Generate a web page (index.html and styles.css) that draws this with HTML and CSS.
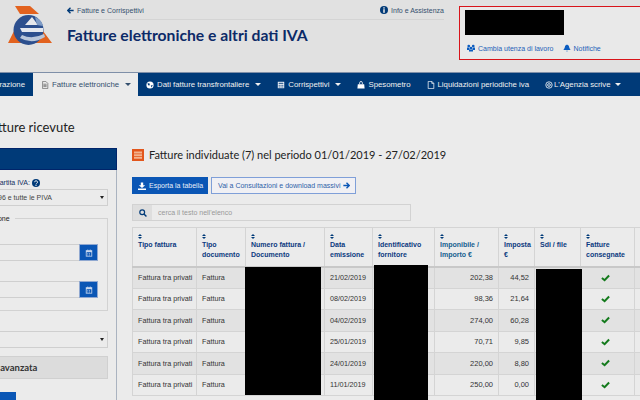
FILE: index.html
```html
<!DOCTYPE html>
<html lang="it">
<head>
<meta charset="utf-8">
<title>Fatture elettroniche e altri dati IVA</title>
<link rel="stylesheet" href="styles.css">
</head>
<body>
<header class="top">
  <svg class="logo" width="46" height="44" viewBox="0 0 46 44">
    <path d="M7 1 L22 1 L31 9 L12 9 Z" fill="#e2621f"/>
    <path d="M7 24 L0 38 L21 38 Q10 36 7 24Z M35 26 L44 38 L24 38 Q33 36 35 26Z" fill="#e2621f"/>
    <ellipse cx="20.500" cy="25" rx="15" ry="15" fill="#2c4f8e"/>
    <path d="M24 12 L30 20 L17 20Z" fill="#e6e8ec"/>
    <path d="M12 23 H35 V27 H14Z" fill="#e4e8ef"/>
    <path d="M14 30 Q24 35 36 29 L37 32 Q24 40 12 33Z" fill="#b9c6da"/>
    <path d="M27 12 Q34 15 35 21 L29 20Z" fill="#7f9cc6"/>
  </svg>
  <div class="top-main">
    <div class="crumbs">
      <a class="crumb"><svg class="ic7" viewBox="0 0 10 10"><path d="M5 1 L1 5 L5 9 M1.500 5 H9.500" fill="none" stroke="#003a78" stroke-width="2"/></svg>Fatture e Corrispettivi</a>
      <a class="crumb"><svg class="ic9" viewBox="0 0 10 10"><circle cx="5" cy="5" r="5" fill="#003a78"/><rect x="4" y="4" width="2" height="4.500" fill="#e0e0e0"/><rect x="4" y="1.600" width="2" height="1.600" fill="#e0e0e0"/></svg>Info e Assistenza</a>
    </div>
    <h1 class="app-title">Fatture elettroniche e altri dati IVA</h1>
  </div>
  <div class="user-box">
    <div class="user-name"></div>
    <div class="user-links">
      <a class="user-link"><svg class="ic8" viewBox="0 0 10 10"><circle cx="2.200" cy="2.500" r="1.700" fill="#0b5cc0"/><circle cx="7.800" cy="2.500" r="1.700" fill="#0b5cc0"/><circle cx="5" cy="5" r="1.700" fill="#0b5cc0"/><path d="M0 4.500h3v3H0zM7 4.500h3v3H7zM2.500 7h5v2.500h-5z" fill="#0b5cc0"/></svg>Cambia utenza di lavoro</a>
      <a class="user-link"><svg class="ic8" viewBox="0 0 10 10"><path d="M5 .5 Q8 1.500 8 5 L9.500 7.500 H.5 L2 5 Q2 1.500 5 .5Z M4 8.300h2L5 9.800Z" fill="#0b5cc0"/></svg>Notifiche</a>
    </div>
  </div>
</header>

<nav class="nav">
  <a class="nav-item cut">Fatturazione</a>
  <a class="nav-item active"><svg class="ic9" viewBox="0 0 10 10"><path d="M2 .5h4l2.500 2.500v6.500H2z M3 4h4M3 5.500h4M3 7h4" fill="none" stroke="#666" stroke-width=".9"/></svg>Fatture elettroniche<i class="caret"></i></a>
  <a class="nav-item"><svg class="ic9" viewBox="0 0 10 10"><circle cx="5" cy="5" r="4.500" fill="#fff"/><path d="M2 2.500 L5 3.500 L4 6 L2.500 5Z M6 5.500 L8.500 5 L7 8Z" fill="#003a78"/></svg>Dati fatture transfrontaliere<i class="caret"></i></a>
  <a class="nav-item"><svg class="ic9" viewBox="0 0 10 10"><path d="M1 1h8v8H1z" fill="#fff"/><path d="M2 2.200h6v1.300H2z M2 4.800h1.500v1.200H2z M4.300 4.800h1.500v1.200H4.300z M6.500 4.800H8v1.200H6.500z M2 6.800h1.500V8H2z M4.300 6.800h1.500V8H4.300z M6.500 6.800H8V8H6.500z" fill="#003a78"/></svg>Corrispettivi<i class="caret"></i></a>
  <a class="nav-item"><svg class="ic9" viewBox="0 0 10 10"><path d="M1 4h8l.5 5.500H.5z" fill="#fff"/><path d="M3.300 4V2.300a1.700 1.700 0 0 1 3.400 0V4" fill="none" stroke="#fff"/></svg>Spesometro</a>
  <a class="nav-item"><svg class="ic9" viewBox="0 0 10 10"><path d="M1.500 .5h4.500l2.500 2.500v6.500h-7z M6 .5v2.500h2.500" fill="none" stroke="#fff" stroke-width=".9"/></svg>Liquidazioni periodiche iva</a>
  <a class="nav-item tight"><svg class="ic9" viewBox="0 0 10 10"><circle cx="5" cy="5" r="4" fill="none" stroke="#fff" stroke-width="1"/><circle cx="5" cy="5" r="1.700" fill="none" stroke="#fff" stroke-width="1"/></svg>L'Agenzia scrive<i class="caret"></i></a>
</nav>

<main class="page">
  <aside class="side">
    <h2 class="page-title">Fatture ricevute</h2>
    <section class="panel">
      <div class="panel-head"></div>
      <div class="panel-body">
        <div class="field-label">Partita IVA: <svg class="ic9" viewBox="0 0 10 10"><circle cx="5" cy="5" r="5" fill="#003a78"/><path d="M3.300 4a1.800 1.700 0 1 1 2.500 1.500Q5 6 5 6.700" fill="none" stroke="#eee" stroke-width="1.200"/><rect x="4.300" y="7.400" width="1.400" height="1.300" fill="#eee"/></svg></div>
        <div class="select"><span>01234567896 e tutte le PIVA</span><i class="sel-caret"></i></div>
        <fieldset class="dates">
          <legend>Data di emissione</legend>
          <div class="date-row first"><div class="date-input"></div><div class="date-btn"><svg class="ic8" viewBox="0 0 10 10"><path d="M1 1.500h8v8H1z" fill="#c8d8ee"/><path d="M2 4h6v4.500H2z" fill="#0a56b5"/><path d="M3 .5h1v2H3zM6 .5h1v2H6zM3 5h1v1H3zM5 5h1v1H5zM3 7h1v1H3zM5 7h1v1H5z" fill="#c8d8ee"/></svg></div></div>
          <div class="date-row"><div class="date-input"></div><div class="date-btn"><svg class="ic8" viewBox="0 0 10 10"><path d="M1 1.500h8v8H1z" fill="#c8d8ee"/><path d="M2 4h6v4.500H2z" fill="#0a56b5"/><path d="M3 .5h1v2H3zM6 .5h1v2H6zM3 5h1v1H3zM5 5h1v1H5zM3 7h1v1H3zM5 7h1v1H5z" fill="#c8d8ee"/></svg></div></div>
        </fieldset>
        <div class="select second"><span></span><i class="sel-caret"></i></div>
        <div class="advanced">Ricerca avanzata</div>
        <div class="search-btn">Ricerca</div>
      </div>
    </section>
  </aside>

  <section class="content">
    <h2 class="result-title"><svg class="list-ic" viewBox="0 0 12 12"><rect width="12" height="12" fill="#e2561c"/><path d="M2 2.500h8v2H2zM2 5.200h8v1.800H2zM2 7.700h8v2H2z" fill="#f3b48f"/></svg>Fatture individuate (7) nel periodo 01/01/2019 - 27/02/2019</h2>
    <div class="actions">
      <a class="btn solid"><svg class="ic8" viewBox="0 0 10 10"><path d="M3.500 .5h3v3.500H9L5 7.500 1 4h2.500zM0 8h10v2H0z" fill="#fff"/></svg>Esporta la tabella</a>
      <a class="btn outline">Vai a Consultazioni e download massivi<svg class="ic7" viewBox="0 0 10 10"><path d="M5 1 L9 5 L5 9 M8.500 5 H.5" fill="none" stroke="#0a56b5" stroke-width="2"/></svg></a>
    </div>
    <div class="filter">
      <div class="filter-ic"><svg class="ic8" viewBox="0 0 10 10"><circle cx="4" cy="4" r="3" fill="none" stroke="#003a78" stroke-width="1.500"/><path d="M6.200 6.200 L9.300 9.300" stroke="#003a78" stroke-width="1.800"/></svg></div>
      <div class="filter-text">cerca il testo nell'elenco</div>
    </div>
    <div class="table-wrap">
      <table class="grid">
        <colgroup><col class="c1"><col class="c2"><col class="c3"><col class="c4"><col class="c5"><col class="c6"><col class="c7"><col class="c8"><col class="c9"><col class="c10"></colgroup>
        <thead><tr>
          <th><i class="sort"></i>Tipo fattura</th>
          <th><i class="sort"></i>Tipo documento</th>
          <th><i class="sort"></i>Numero fattura / Documento</th>
          <th><i class="sort"></i>Data emissione</th>
          <th><i class="sort"></i>Identificativo fornitore</th>
          <th class="teal"><i class="sort"></i>Imponibile / Importo €</th>
          <th><i class="sort"></i>Imposta €</th>
          <th><i class="sort"></i>Sdi / file</th>
          <th><i class="sort"></i>Fatture consegnate</th>
          <th><i class="sort"></i>Data</th>
        </tr></thead>
        <tbody>
          <tr><td>Fattura tra privati</td><td>Fattura</td><td></td><td>21/02/2019</td><td></td><td class="num">202,38</td><td class="num">44,52</td><td></td><td class="ok"><svg class="check" viewBox="0 0 10 8"><path d="M1 4 L4 6.500 L9 1.200" fill="none" stroke="#137a1c" stroke-width="2.200"/></svg></td><td>2</td></tr>
          <tr><td>Fattura tra privati</td><td>Fattura</td><td></td><td>08/02/2019</td><td></td><td class="num">98,36</td><td class="num">21,64</td><td></td><td class="ok"><svg class="check" viewBox="0 0 10 8"><path d="M1 4 L4 6.500 L9 1.200" fill="none" stroke="#137a1c" stroke-width="2.200"/></svg></td><td>1</td></tr>
          <tr><td>Fattura tra privati</td><td>Fattura</td><td></td><td>04/02/2019</td><td></td><td class="num">274,00</td><td class="num">60,28</td><td></td><td class="ok"><svg class="check" viewBox="0 0 10 8"><path d="M1 4 L4 6.500 L9 1.200" fill="none" stroke="#137a1c" stroke-width="2.200"/></svg></td><td>0</td></tr>
          <tr><td>Fattura tra privati</td><td>Fattura</td><td></td><td>25/01/2019</td><td></td><td class="num">70,71</td><td class="num">9,85</td><td></td><td class="ok"><svg class="check" viewBox="0 0 10 8"><path d="M1 4 L4 6.500 L9 1.200" fill="none" stroke="#137a1c" stroke-width="2.200"/></svg></td><td>2</td></tr>
          <tr><td>Fattura tra privati</td><td>Fattura</td><td></td><td>24/01/2019</td><td></td><td class="num">220,00</td><td class="num">8,80</td><td></td><td class="ok"><svg class="check" viewBox="0 0 10 8"><path d="M1 4 L4 6.500 L9 1.200" fill="none" stroke="#137a1c" stroke-width="2.200"/></svg></td><td>2</td></tr>
          <tr><td>Fattura tra privati</td><td>Fattura</td><td></td><td>11/01/2019</td><td></td><td class="num">250,00</td><td class="num">0,00</td><td></td><td class="ok"><svg class="check" viewBox="0 0 10 8"><path d="M1 4 L4 6.500 L9 1.200" fill="none" stroke="#137a1c" stroke-width="2.200"/></svg></td><td>1</td></tr>
        </tbody>
      </table>
      <div class="mask m1"></div>
      <div class="mask m2"></div>
      <div class="mask m3"></div>
    </div>
  </section>
</main>
</body>
</html>
```
FILE: styles.css
```css
html, body { margin: 0; padding: 0; }
body {
  width: 640px; height: 400px; overflow: hidden;
  background: #ebebeb; color: #333;
  font-family: "Liberation Sans", Arial, sans-serif; font-size: 7px;
}
a { color: inherit; text-decoration: none; }
svg { display: block; flex: none; }
.ic7 { width: 7px; height: 7px; }
.ic8 { width: 8px; height: 8px; }
.ic9 { width: 8px; height: 8px; }

/* Header */
.top { height: 72px; box-sizing: border-box; background: #e1e1e1; display: flex; align-items: flex-start; overflow: hidden; }
.logo { margin: 5px 0 0 8px; }
.top-main { width: 377px; margin-left: 13px; flex: none; }
.crumbs { display: flex; justify-content: space-between; height: 20px; border-bottom: 1px solid #d4d4d4; box-sizing: border-box; color: #35506e; align-items: center; padding-top: 1px; }
.crumb { display: flex; align-items: center; gap: 3px; }
.app-title { margin: 3px 0 0; font: 700 15.700px/24px Lato, sans-serif; color: #0c2a68; white-space: nowrap; }
.user-box { margin: 6px 0 0 15px; width: 200px; height: 54px; box-sizing: border-box; border: 1px solid #d8141a; background: #e9e9e9; padding: 3px 5px; flex: none; }
.user-name { width: 99px; height: 25px; background: #000; }
.user-links { display: flex; gap: 9px; margin-top: 9px; padding-left: 2px; color: #1d5fb8; }
.user-link { display: flex; align-items: center; gap: 3px; }

/* Nav */
.nav { height: 24px; box-sizing: border-box; background: #003a78; border-top: 1px solid #7f8fa8; display: flex; color: #f0f0f0; margin-left: -32px; white-space: nowrap; font-size: 7.800px; }
.nav-item { display: flex; align-items: center; gap: 3px; padding: 0 8px; flex: none; }
.nav-item.cut { width: 65px; box-sizing: border-box; justify-content: flex-end; }
.nav-item.active { background: #ebebeb; color: #35506e; width: 105px; box-sizing: border-box; }
.nav-item.tight { gap: 1px; }
.caret { width: 0; height: 0; border: 3px solid transparent; border-top-color: currentColor; border-bottom: 0; margin-left: 3px; }

/* Layout */
.page { display: flex; align-items: flex-start; height: 304px; overflow: hidden; }
.side { width: 117px; flex: none; }
.page-title { margin: 21px 0 11px -15px; font: 400 13px/20px Lato, sans-serif; color: #222; white-space: nowrap; }
.panel { margin-left: -50px; border-right: 1px solid #aab3c0; }
.panel-head { height: 22px; background: #003a78; margin-right: -1px; border: 1px solid #00246a; box-sizing: border-box; }
.panel-body { padding: 8px 8px 0 0; color: #222; display: flex; flex-direction: column; align-items: flex-end; height: 240px; }
.field-label { display: flex; align-items: center; gap: 2px; color: #12305f; height: 9px; align-self: flex-start; margin-left: 45px; white-space: nowrap; }
.select { width: 160px; height: 17px; margin-top: 2px; box-sizing: border-box; border: 1px solid #cfcfcf; display: flex; align-items: center; justify-content: flex-end; padding-right: 3px; color: #444; white-space: nowrap; }
.select span { margin-right: 48px; }
.sel-caret { width: 0; height: 0; border: 2px solid transparent; border-top: 3px solid #222; border-bottom: 0; }
.dates { width: 160px; height: 97px; margin: 8px 0 0; box-sizing: border-box; border: 1px solid #d2d2d2; padding: 0 9px 0 0; display: flex; flex-direction: column; align-items: flex-end; }
.dates legend { margin-left: 0; padding: 0 5px; color: #222; line-height: 9px; white-space: nowrap; }
.date-row { display: flex; width: 148px; height: 17px; margin-top: 20px; }
.date-row.first { margin-top: 21px; }
.date-input { flex: 1; border-top: 1px solid #cfcfcf; border-bottom: 1px solid #cfcfcf; box-sizing: border-box; }
.date-btn { width: 19px; background: #0a56b5; border: 1px solid #90a8d0; box-sizing: border-box; display: flex; align-items: center; justify-content: center; }
.second { margin-top: 20px; }
.advanced { width: 160px; height: 23px; margin-top: 8px; box-sizing: border-box; background: #dcdcdc; border: 1px solid #d0d0d0; font: 700 9.500px/21px Lato, sans-serif; padding-left: 18px; white-space: nowrap; color: #333; overflow: hidden; }
.search-btn { width: 50px; height: 20px; margin: 13px 0 0 16px; align-self: flex-start; background: #0a56b5; color: #fff; text-align: right; padding-right: 6px; box-sizing: border-box; line-height: 20px; }

.content { margin-left: 15px; flex: none; width: 600px; }
.result-title { display: flex; align-items: center; gap: 5px; margin: 49px 0 0; font: 400 11px/20px Lato, sans-serif; color: #222; white-space: nowrap; }
.list-ic { width: 12px; height: 12px; }
.actions { display: flex; gap: 3px; margin-top: 12px; }
.btn { display: flex; align-items: center; height: 17px; box-sizing: border-box; gap: 3px; white-space: nowrap; }
.btn.solid { background: #0a56b5; color: #e8eef8; width: 76px; padding-left: 6px; }
.btn.outline { border: 1px solid #7f9fd8; background: #f0f0f4; color: #2f5fa8; width: 145px; padding-left: 6px; }
.filter { display: flex; height: 17px; width: 279px; margin-top: 10px; box-sizing: border-box; border: 1px solid #d2d2d2; }
.filter-ic { width: 19px; background: #dedede; display: flex; align-items: center; justify-content: center; }
.filter-text { padding-left: 6px; color: #999; line-height: 15px; }

/* Table */
.table-wrap { position: relative; margin-top: 6px; width: 600px; }
.grid { border-collapse: collapse; table-layout: fixed; width: 590px; }
.c1 { width: 64px; } .c2 { width: 49px; } .c3 { width: 79px; } .c4 { width: 48px; } .c5 { width: 62px; }
.c6 { width: 64px; } .c7 { width: 36px; } .c8 { width: 46px; } .c9 { width: 54px; } .c10 { width: 88px; }
.grid th { height: 39px; box-sizing: border-box; padding: 6px 5px 0; border: 1px solid #d4d4d4; border-bottom: 2px solid #c8c8c8; text-align: left; vertical-align: top; color: #0c3a80; font-size: 7px; font-weight: 700; line-height: 10px; background: #ebebeb; }
.grid th.teal { color: #175f90; }
.sort { display: flex; flex-direction: column; gap: 1px; width: 5px; height: 6px; }
.sort::before, .sort::after { content: ""; width: 0; height: 0; border-left: 2.500px solid transparent; border-right: 2.500px solid transparent; }
.sort::before { border-bottom: 2.500px solid #003a78; }
.sort::after { border-top: 2.500px solid #003a78; }
.grid td { height: 21.500px; box-sizing: border-box; padding: 0 5px; border: 1px solid #d4d4d4; white-space: nowrap; color: #333; font-size: 7.200px; overflow: hidden; }
.grid tbody tr:nth-child(odd) td { background: #e2e2e2; }
.grid .num { text-align: right; font-size: 7.500px; }
.grid .ok { padding: 0; }
.check { width: 9px; height: 8px; margin: 0 0 0 20px; }
.mask { position: absolute; background: #000; }
.m1 { left: 113px; top: 40px; width: 76px; height: 128px; }
.m2 { left: 242px; top: 38px; width: 54px; height: 140px; }
.m3 { left: 404px; top: 42px; width: 46px; height: 140px; }
```
